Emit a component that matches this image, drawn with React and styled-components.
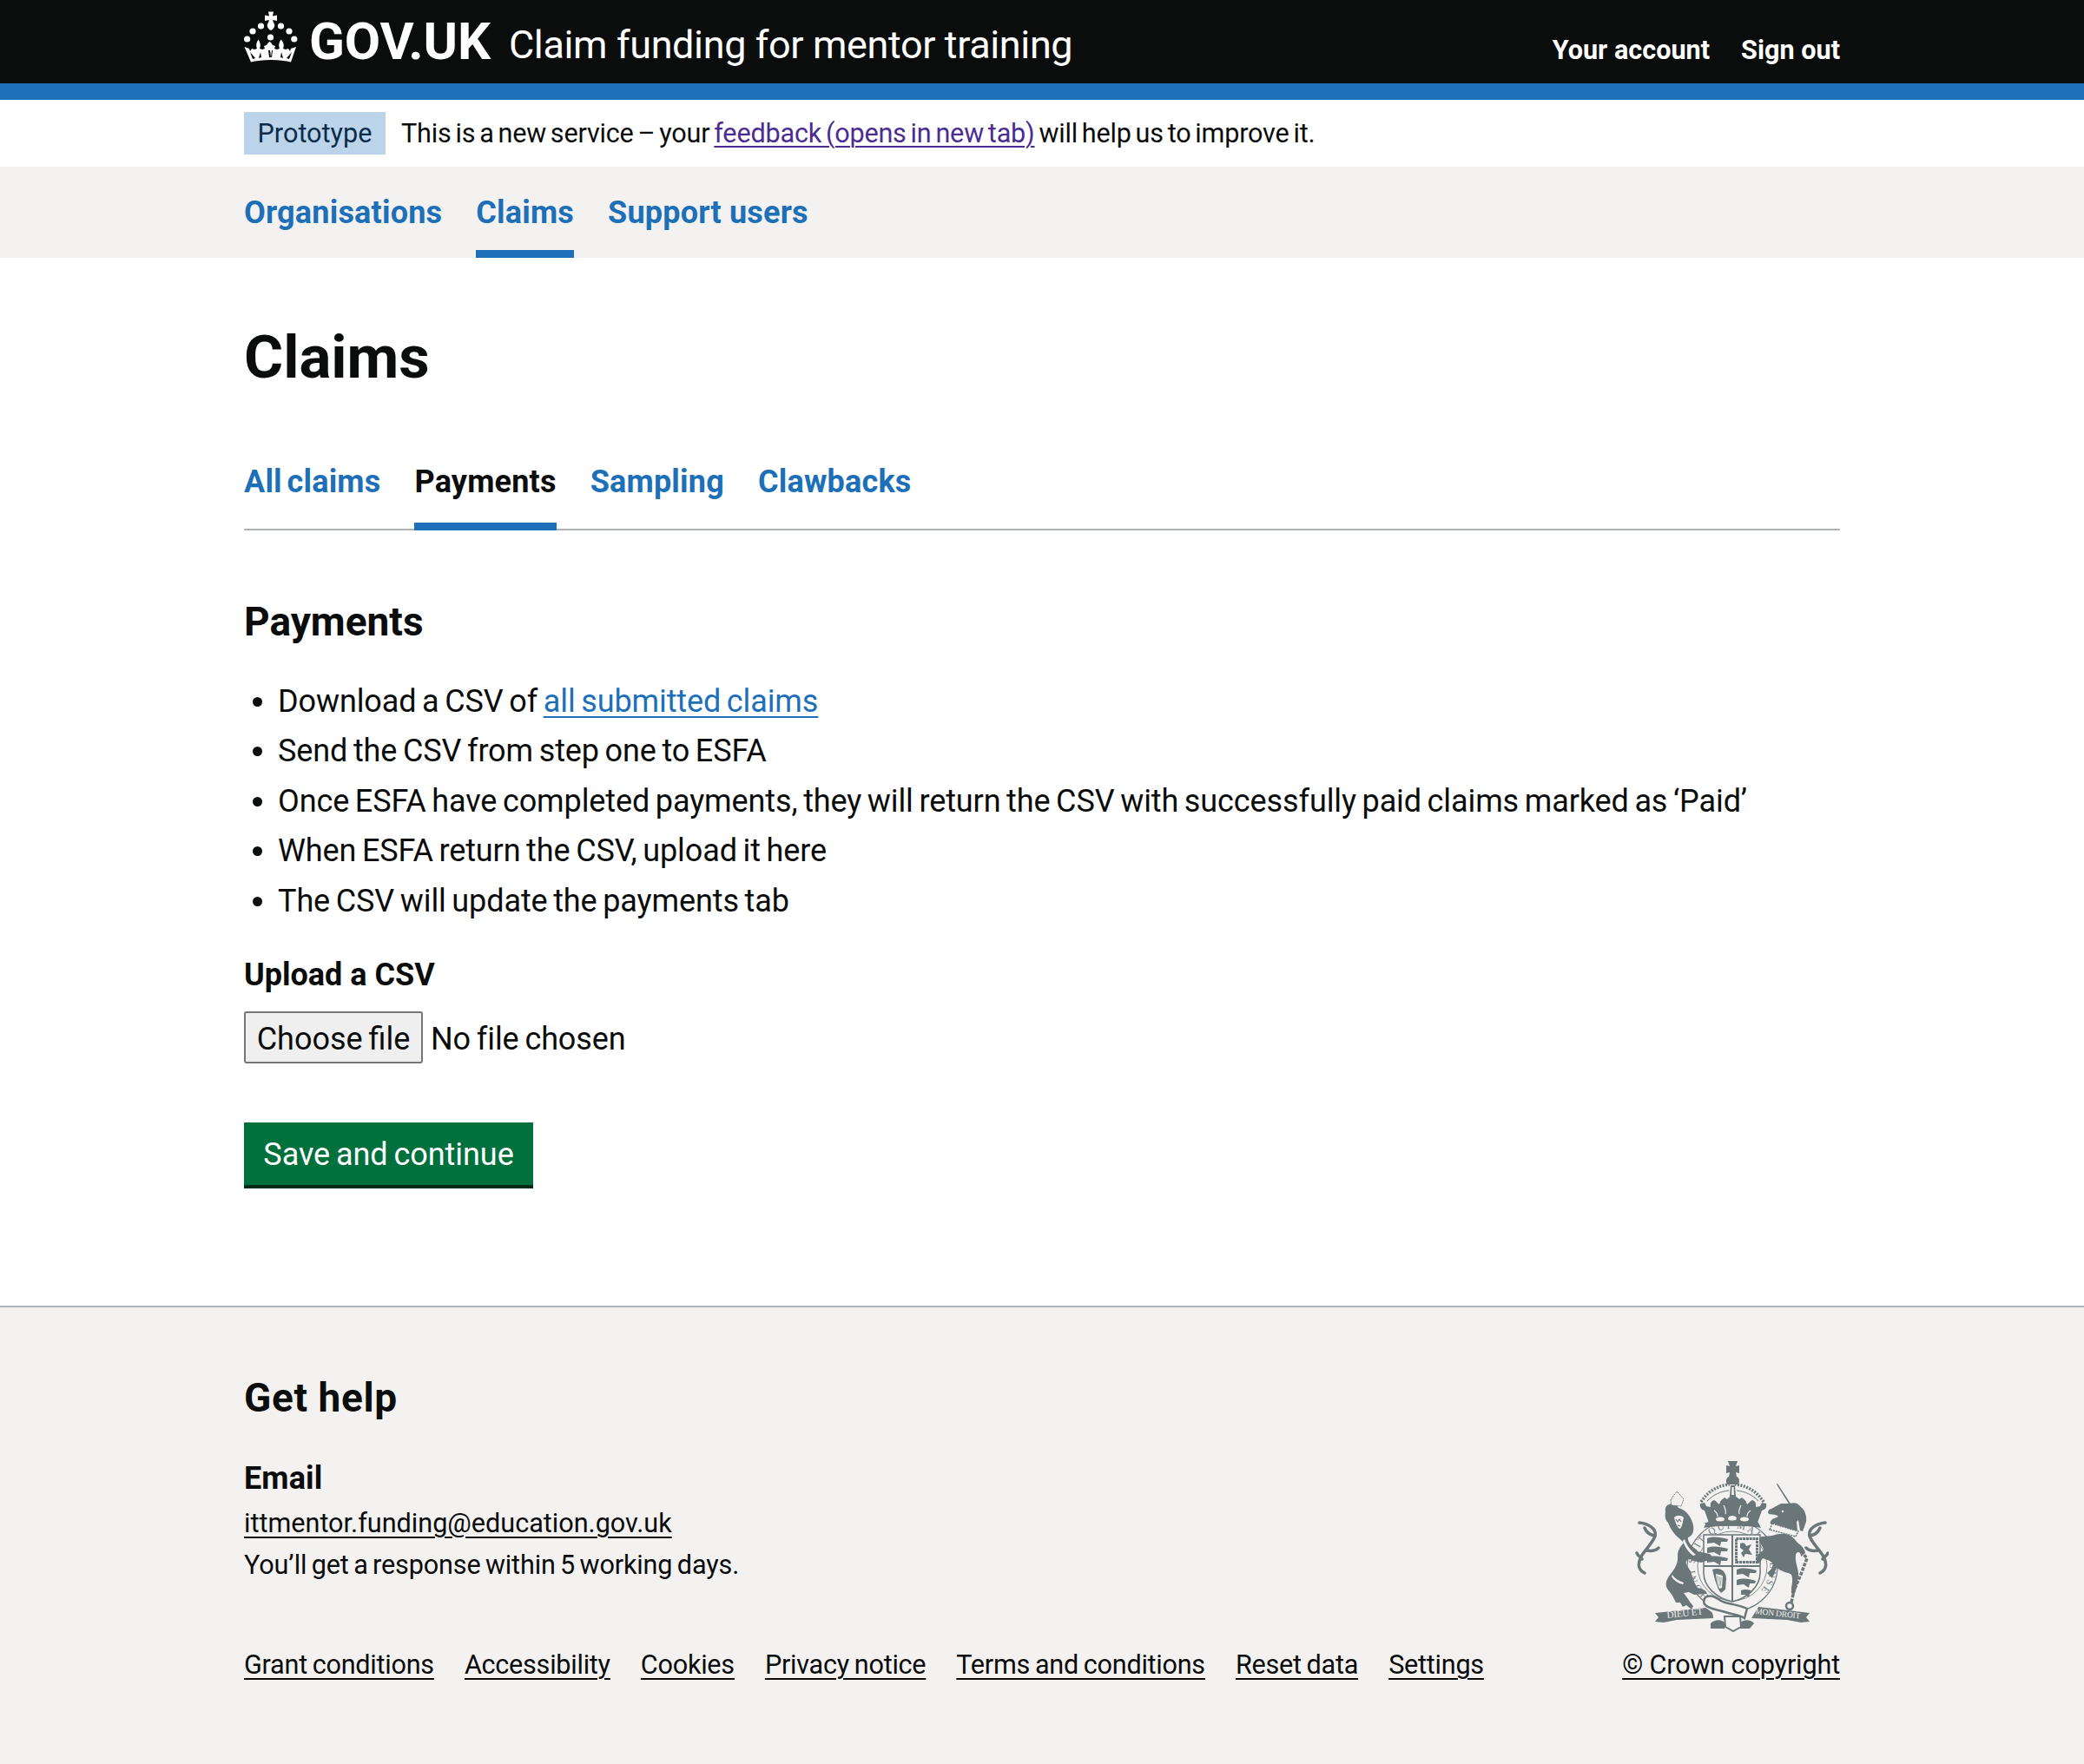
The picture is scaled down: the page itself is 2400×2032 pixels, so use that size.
import React from "react";
import styled, { createGlobalStyle } from "styled-components";

const Global = createGlobalStyle`
  html, body { margin: 0; padding: 0; background: #fff; }
  body { font-family: Roboto, "Noto Sans", Arial, sans-serif; color: #0b0c0c; font-size: 36px; line-height: 48px; }
  * { box-sizing: border-box; }
`;
const Container = styled.div`
  width: 1838px;
  margin-left: 281px;
`;
const Header = styled.header`
  height: 115px;
  background: #0b0c0c;
  border-bottom: 19px solid #1d70b8;
`;
const HeaderRow = styled(Container)`
  display: flex;
  align-items: flex-start;
  height: 96px;
`;
const Logo = styled.a`
  display: flex;
  align-items: flex-start;
  gap: 13px;
  height: 96px;
  color: #fff;
  font-weight: 700;
  font-size: 60px;
  letter-spacing: -0.1px;
  svg { margin-top: 13px; }
  span { margin-top: 18px; line-height: 60px; }
`;
const ServiceName = styled.a`
  margin-left: 21px;
  color: #fff;
  font-size: 45px;
  letter-spacing: -0.38px;
  line-height: 60px;
  margin-top: 22px;
`;
const AccountNav = styled.nav`
  margin-left: auto;
  display: flex;
  gap: 36px;
  margin-top: 34px;
  color: #fff;
  font-weight: 700;
  font-size: 30.6px;
  line-height: 48px;
`;
const Phase = styled(Container)`
  height: 77px;
  display: flex;
  align-items: center;
  font-size: 30.6px;
  line-height: 40px;
`;
const PhaseTag = styled.strong`
  font-weight: 400;
  background: #bbd4ea;
  color: #0c2d4a;
  height: 49px;
  width: 163px;
  margin-right: 18px;
  display: flex;
  align-items: center;
  justify-content: center;
`;
const PhaseText = styled.span`
  word-spacing: -2.5px;
  letter-spacing: -0.2px;
`;
const VisitedLink = styled.a`
  color: #4c2c92;
  text-decoration: underline;
  text-decoration-thickness: 2px;
  text-underline-offset: 4px;
`;
const PrimaryNav = styled.div`
  background: #f3f2f1;
  height: 105px;
`;
const NavRow = styled(Container)`
  display: flex;
  gap: 39px;
  height: 105px;
`;
const NavItem = styled.a`
  color: #1d70b8;
  font-weight: 700;
  font-size: 36px;
  letter-spacing: 0.2px;
  line-height: 48px;
  padding-top: 29px;
  border-bottom: 9px solid ${p => (p.$active ? "#1d70b8" : "transparent")};
`;
const Main = styled(Container)`
  padding-top: 67px;
  height: 1207px;
`;
const Title = styled.h1`
  margin: 0;
  font-size: 69px;
  line-height: 96px;
  font-weight: 700;
`;
const Tabs = styled.div`
  display: flex;
  gap: 39px;
  margin-top: 65px;
  height: 86px;
  border-bottom: 2px solid #b1b4b6;
`;
const Tab = styled.a`
  font-weight: 700;
  font-size: 36px;
  letter-spacing: 0.2px;
  word-spacing: -3.5px;
  line-height: 48px;
  height: 86px;
  padding-top: 6px;
  color: ${p => (p.$active ? "#0b0c0c" : "#1d70b8")};
  border-bottom: 9px solid ${p => (p.$active ? "#1d70b8" : "transparent")};
`;
const SectionTitle = styled.h2`
  margin: 75px 0 0;
  font-size: 46px;
  line-height: 60px;
  font-weight: 700;
`;
const Steps = styled.ul`
  margin: 38px 0 0;
  padding: 0 0 0 39px;
  word-spacing: -2.2px;
  letter-spacing: -0.1px;
  li { margin-bottom: 9.4px; }
`;
const BlueLink = styled.a`
  color: #1d70b8;
  text-decoration: underline;
  text-decoration-thickness: 2px;
  text-underline-offset: 5px;
`;
const Label = styled.label`
  display: block;
  margin-top: 37px;
  font-weight: 700;
  font-size: 36px;
`;
const FileRow = styled.div`
  display: flex;
  align-items: center;
  gap: 9px;
  margin-top: 18px;
  height: 60px;
`;
const HiddenFile = styled.input`
  display: none;
`;
const ChooseButton = styled.label`
  display: flex;
  align-items: center;
  justify-content: center;
  width: 206px;
  height: 60px;
  color: #0b0c0c;
  background: #efefef;
  border: 2px solid #767676;
  border-radius: 3px;
  padding-top: 4px;
  word-spacing: -2px;
`;
const NoFile = styled.span`
  word-spacing: -2px;
  letter-spacing: -0.1px;
  padding-top: 4px;
`;
const SaveButton = styled.button`
  display: block;
  margin-top: 68px;
  width: 333px;
  height: 76px;
  padding: 0 0 1px;
  background: #00703c;
  color: #fff;
  border: 0;
  box-shadow: inset 0 -4px 0 #002d18;
  font-family: inherit;
  font-size: 36px;
  word-spacing: -2px;
  letter-spacing: -0.05px;
`;
const Footer = styled.footer`
  background: #f3f2f1;
  border-top: 2px solid #b1b4b6;
  height: 528px;
`;
const FooterRow = styled(Container)`
  display: flex;
  justify-content: space-between;
  align-items: flex-end;
  padding-top: 74px;
`;
const FooterLeft = styled.div`
  display: flex;
  flex-direction: column;
`;
const HelpTitle = styled.h2`
  margin: 0;
  font-size: 46px;
  letter-spacing: 0.6px;
  line-height: 60px;
  font-weight: 700;
`;
const HelpLabel = styled.h3`
  margin: 39px 0 0;
  font-size: 36px;
  letter-spacing: 0.1px;
  line-height: 48px;
  font-weight: 700;
`;
const FootText = styled.p`
  margin: 4px 0 0;
  font-size: 30.6px;
  line-height: 48px;
  & + & { margin-top: 0; word-spacing: -2px; letter-spacing: -0.15px; }
`;
const FootLink = styled.a`
  color: #0b0c0c;
  font-size: 30.6px;
  line-height: 48px;
  text-decoration: underline;
  text-decoration-thickness: 2px;
  text-underline-offset: 5px;
`;
const FootLinks = styled.div`
  display: flex;
  gap: 35px;
  margin-top: 67px;
  letter-spacing: -0.25px;
  word-spacing: -1.5px;
`;
const Crest = styled.div`
  display: flex;
  flex-direction: column;
  align-items: flex-end;
  letter-spacing: -0.15px;
  svg { margin: 0 13px 14px 0; display: block; }
`;

const Crown = () => (
  <svg width="62" height="60" viewBox="0 0 62 60" fill="#fff" aria-hidden="true">
    <path d="M28 0.500h6l-1 5 5-1v6.500l-5-1 1 3c2.500 3 1 7-3 9-4-2-5.500-6-3-9l1-3-5 1V4.500l5 1z" />
    <circle cx="19.500" cy="17" r="3.600" /><circle cx="42.500" cy="17" r="3.600" />
    <circle cx="10" cy="23" r="3.600" /><circle cx="52" cy="23" r="3.600" />
    <circle cx="3.600" cy="32" r="3.600" /><circle cx="57.800" cy="32" r="3.600" />
    <circle cx="30.500" cy="30" r="3.600" />
    <path d="M0.500 41l5.500 2 1 3 2-3 3 1 3-1c-1.500-3-1-7 1.500-10.500C19 36 19.500 40 18 43l3 1 3-1-1-3 3-1 2-3 1.500-1 1.500 1 2 3 3 1-1 3 3 1 3-1c-1.500-3-1-7 1.500-10.500C46 36 46.500 40 45 43l3 1 3-1 2 3 1-3 6-2-6 17.500c-6-1.500-14-2.500-23-2.500s-17 1-23 2.500z" />
    <g fill="#0b0c0c">
      <path d="M7 47l6 7-3 1zM55 47l-6 7 3 1zM19 47l-2 7 3-1zM43 47l2 7-3-1zM28 45l1 8 2 0-1-8zM33 45l-1 8-1 0 1-8z" />
    </g>
  </svg>
);

const Arms = () => (
  <svg width="224" height="198" viewBox="22 12 224 198" aria-hidden="true">
    <defs>
      <path id="garter" d="M108 168 A43.400 43.400 0 1 1 162 168" />
    </defs>
    <g fill="#6b7679" stroke="none">
      {/* crown */}
      <path d="M130 13h11l-2 6 4-1v9l-4-1 1 5c3 1 4 5 2 9h-13c-2-4-1-8 2-9l1-5-4 1v-9l4 1z" />
      <path d="M133 41h5l1 13h-7z" />
      <path d="M134.500 43h2l.5 9h-3z" fill="#f3f2f1" />
      <path d="M99 60c8-12 19-19 33-20M171 60c-8-12-19-19-33-20" fill="none" stroke="#6b7679" strokeWidth="3.500" strokeDasharray="2 1.500" />
      <path d="M106 59c7-7 15-11 25-12M165 59c-7-7-15-11-25-12" fill="none" stroke="#6b7679" strokeWidth="1" />
      <path d="M108 84l-5-14c-4-1-6-4-5-8l5-1 2 4 5 1c-1-5 1-7 4-8 3 1 3 3 6 5 1-5 4-6 6-8l3 2c3-3 5-4 7-5 3 2 5 3 7 5l3-2c2 2 5 3 6 8 3-2 3-4 6-5 3 1 5 3 4 8l5-1 2-4 5 1c1 4-1 7-5 8l-5 14c-8 5-50 5-62 0z" />
      <path d="M114 70c3 2 4 4 4 7M156 70c-3 2-4 4-4 7M125 64c2 4 3 7 2 10M145 64c-2 4-3 7-2 10" fill="none" stroke="#f3f2f1" strokeWidth="1.200" />
      <path d="M105 84c12-5 46-5 60 0l3 6c-14-3-52-3-66 0z" />
      <ellipse cx="121" cy="80" rx="5" ry="2.500" fill="#f3f2f1" /><ellipse cx="135" cy="79" rx="5" ry="3" fill="#f3f2f1" /><ellipse cx="149" cy="80" rx="5" ry="2.500" fill="#f3f2f1" />
      {/* garter */}
      <circle cx="135" cy="134" r="52" fill="none" stroke="#6b7679" strokeWidth="1.200" />
      <circle cx="135" cy="134" r="40" fill="none" stroke="#6b7679" strokeWidth="0.800" />
      <text fontFamily="Liberation Serif, serif" fontSize="11" fill="#6b7679">
        <textPath href="#garter" textLength="205">HONI SOIT QUI MAL Y PENSE</textPath>
      </text>
      {/* shield */}
      <path d="M102 98h65v44c0 15-14 29-32 33-19-4-33-18-33-33z" fill="#f3f2f1" stroke="#6b7679" strokeWidth="1.500" />
      <path d="M134 98h2v77h-2zM102 133h65v2h-65z" />
      <path d="M139.500 102.500h24v27h-24z" fill="none" stroke="#6b7679" strokeWidth="3" strokeDasharray="3 .8" />
      <path d="M144 108c4-2 6 0 7 3l6-2-3 6 4 6-8-1-2 4-3-5 3-3-4-3z" />
      <path d="M140 138c8-3 15-1 23 1l-1 3-7 0-1 5-7-4-7 1zM140 150c8-3 15-1 22 1l-1 3-6 0-1 5-6-4-8 1zM145 162c6-2 9-1 13 1l-3 3-1 4-4-3-5 0z" />
      <path d="M106 102c8-3 15-1 24 1l-1 3-7 0-1 5-7-4-8 1zM106 113c8-3 15-1 24 1l-1 3-7 0-1 5-7-4-8 1zM106 124c8-3 15-1 24 1l-1 3-7 0-1 5-7-4-8 1z" />
      <path d="M112 138c9-3 15 1 16 10l-1 13-5 4-3-4-4-11z" />
      <path d="M116 143l8 2-1 14-3 1-3-8z" fill="#f3f2f1" />
      <path d="M118 145l-.5 10M120 146l0 11M122 146.500l-.5 10" stroke="#6b7679" strokeWidth=".6" fill="none" />
      {/* lion */}
      <path d="M58 71c-1-4 1-7 4-8 6-3 9 0 11 4 8 2 15 10 17 20 1 8-1 12-6 14-1 4 3 9 7 12l4 4 14 3 5 5-3 4-6-1-6 2-9-2-4-2c-4 0-5 3-4 6l5 8c2 6 4 14 8 19 6 1 10 3 11 7l-15 1-6-3-6 1 3 4c3 4 5 8 8 11l-2 4-6-5-4 2-3-5-5 0-4-8-6-8c-3-5-1-11 4-17 5-6 9-13 8-21 0-7 4-11 7-15-4-5-13-9-18-23-3-3-4-6-3-13z" />
      <path d="M64 58c3-6 6-8 7-10 2 2 5 5 8 9-1 3-2 5-3 8l-11-1z" stroke="#6b7679" strokeWidth="1" fill="#f3f2f1" strokeDasharray="1.500 .8" />
      <path d="M68 78c3-3 8-3 11 0-1 4-1 9-4 13-2 0-5-4-7-13z" fill="#f3f2f1" />
      <path d="M70 80l2 3 2-3 2 3M72 87l3 1" fill="none" stroke="#6b7679" strokeWidth="1.200" />
      <path d="M80 103c2 7 7 13 13 18l-3 1c-6-4-10-11-12-17zM66 144c3 5 8 7 13 9l-1 2c-5-1-10-4-13-9z" fill="#f3f2f1" />
      {/* unicorn */}
      <path d="M187 39l15 23-1.500 1-14.500-23z" />
      <path d="M201 62c6-2 10 0 13 4 4 3 7 9 6 17l-4 11-3-1-2-12-2 2 1 10-5 2-19-4-2-6c-6 2-7-1-3-5l7-3c-2-3-8-2-11-3-2-2 0-6 3-6l11-6z" />
      <path d="M181 85l30 9-3 6-30-8z" fill="#f3f2f1" stroke="#6b7679" strokeWidth="1.500" strokeDasharray="2 1" />
      <circle cx="193" cy="71" r="1.200" fill="#f3f2f1" />
      <path d="M181 99c12-4 21-3 29 8 4 3 8 6 9 12l-5 4c0-7-6-6-6-1-1 9 4 15 3 24l-2 13-3 9-3-3c-1-6 3-14 0-21-3-3-9-2-17-8l-5 12-6-6c2-2 5-3 7-10-3-5-7-5-12-7-3 5-6 9-7 3 0-8 5-11 8-12-1-7-6-8-5-14 2-3 9-2 14-3z" />
      {/* chain */}
      <path d="M214 117l7 8-6 16-9 21-3 14" fill="none" stroke="#6b7679" strokeWidth="3.500" strokeDasharray="4 1.500" />
      <circle cx="201" cy="180" r="4" fill="none" stroke="#6b7679" strokeWidth="2.500" />
      {/* mantling */}
      <g fill="none" stroke="#6b7679" strokeWidth="3.500" strokeLinecap="round">
        <path d="M28 84c10 1 20 7 18 15-2 8-11 15-16 24-4 8-4 15 4 19" />
        <path d="M46 99c-7-1-10-4-12-9M36 116c6 1 11 0 14-3M31 126c-2-3-5-4-6-7" />
        <path d="M242 84c-10 1-20 7-18 15 2 8 11 15 16 24 4 8 4 15-4 19" />
        <path d="M224 99c7-1 10-4 12-9M234 116c-6 1-11 0-14-3M239 126c2-3 5-4 6-7" />
      </g>
      {/* ribbons */}
      <path d="M46 188l58-6 6 4c3 2 3 6 3 8l-42 2-15 3-10-1 4-5z" />
      <path d="M224 188l-59-7-3 5-5 8 41 2 16 3 10-1-4-5z" />
      <path d="M104 170c8-4 12 1 20 5 8 3 20 4 28 8l-3 11c-6-4-13-4-22-7-9-3-17-3-23-8-3-3-2-6 0-9z" fill="#f3f2f1" stroke="#6b7679" strokeWidth="2.500" />
      <path d="M110 200c5-5 13-5 17 0l-1 6h-16zM143 200c5-5 13-5 17 0l-5 6h-12z" />
      <path d="M126 192h18l1 12-9 5-9-5z" fill="#f3f2f1" stroke="#6b7679" strokeWidth="2" />
      <text x="60" y="194" fontFamily="Liberation Serif, serif" fontSize="11" fill="#f3f2f1" transform="rotate(-6 60 194)">DIEU ET</text>
      <text x="161" y="189" fontFamily="Liberation Serif, serif" fontSize="9.500" fill="#f3f2f1" transform="rotate(6 161 189)">MON DROIT</text>
    </g>
  </svg>
);

const steps = [
  "Send the CSV from step one to ESFA",
  "Once ESFA have completed payments, they will return the CSV with successfully paid claims marked as ‘Paid’",
  "When ESFA return the CSV, upload it here",
  "The CSV will update the payments tab",
];
const footerLinks = ["Grant conditions", "Accessibility", "Cookies", "Privacy notice", "Terms and conditions", "Reset data", "Settings"];

export default function App() {
  return (
    <>
      <Global />
      <Header>
        <HeaderRow>
          <Logo><Crown /><span>GOV.UK</span></Logo>
          <ServiceName>Claim funding for mentor training</ServiceName>
          <AccountNav><span>Your account</span><span>Sign out</span></AccountNav>
        </HeaderRow>
      </Header>
      <Phase>
        <PhaseTag>Prototype</PhaseTag>
        <PhaseText>This is a new service – your <VisitedLink>feedback (opens in new tab)</VisitedLink> will help us to improve it.</PhaseText>
      </Phase>
      <PrimaryNav>
        <NavRow>
          <NavItem>Organisations</NavItem>
          <NavItem $active>Claims</NavItem>
          <NavItem>Support users</NavItem>
        </NavRow>
      </PrimaryNav>
      <Main>
        <Title>Claims</Title>
        <Tabs>
          <Tab>All claims</Tab>
          <Tab $active>Payments</Tab>
          <Tab>Sampling</Tab>
          <Tab>Clawbacks</Tab>
        </Tabs>
        <SectionTitle>Payments</SectionTitle>
        <Steps>
          <li>Download a CSV of <BlueLink>all submitted claims</BlueLink></li>
          {steps.map(s => <li key={s}>{s}</li>)}
        </Steps>
        <Label htmlFor="csv">Upload a CSV</Label>
        <FileRow>
          <HiddenFile id="csv" type="file" />
          <ChooseButton htmlFor="csv">Choose file</ChooseButton>
          <NoFile>No file chosen</NoFile>
        </FileRow>
        <SaveButton>Save and continue</SaveButton>
      </Main>
      <Footer>
        <FooterRow>
          <FooterLeft>
            <HelpTitle>Get help</HelpTitle>
            <HelpLabel>Email</HelpLabel>
            <FootText><FootLink>ittmentor.funding@education.gov.uk</FootLink></FootText>
            <FootText>You’ll get a response within 5 working days.</FootText>
            <FootLinks>{footerLinks.map(l => <FootLink key={l}>{l}</FootLink>)}</FootLinks>
          </FooterLeft>
          <Crest>
            <Arms />
            <FootLink>© Crown copyright</FootLink>
          </Crest>
        </FooterRow>
      </Footer>
    </>
  );
}
